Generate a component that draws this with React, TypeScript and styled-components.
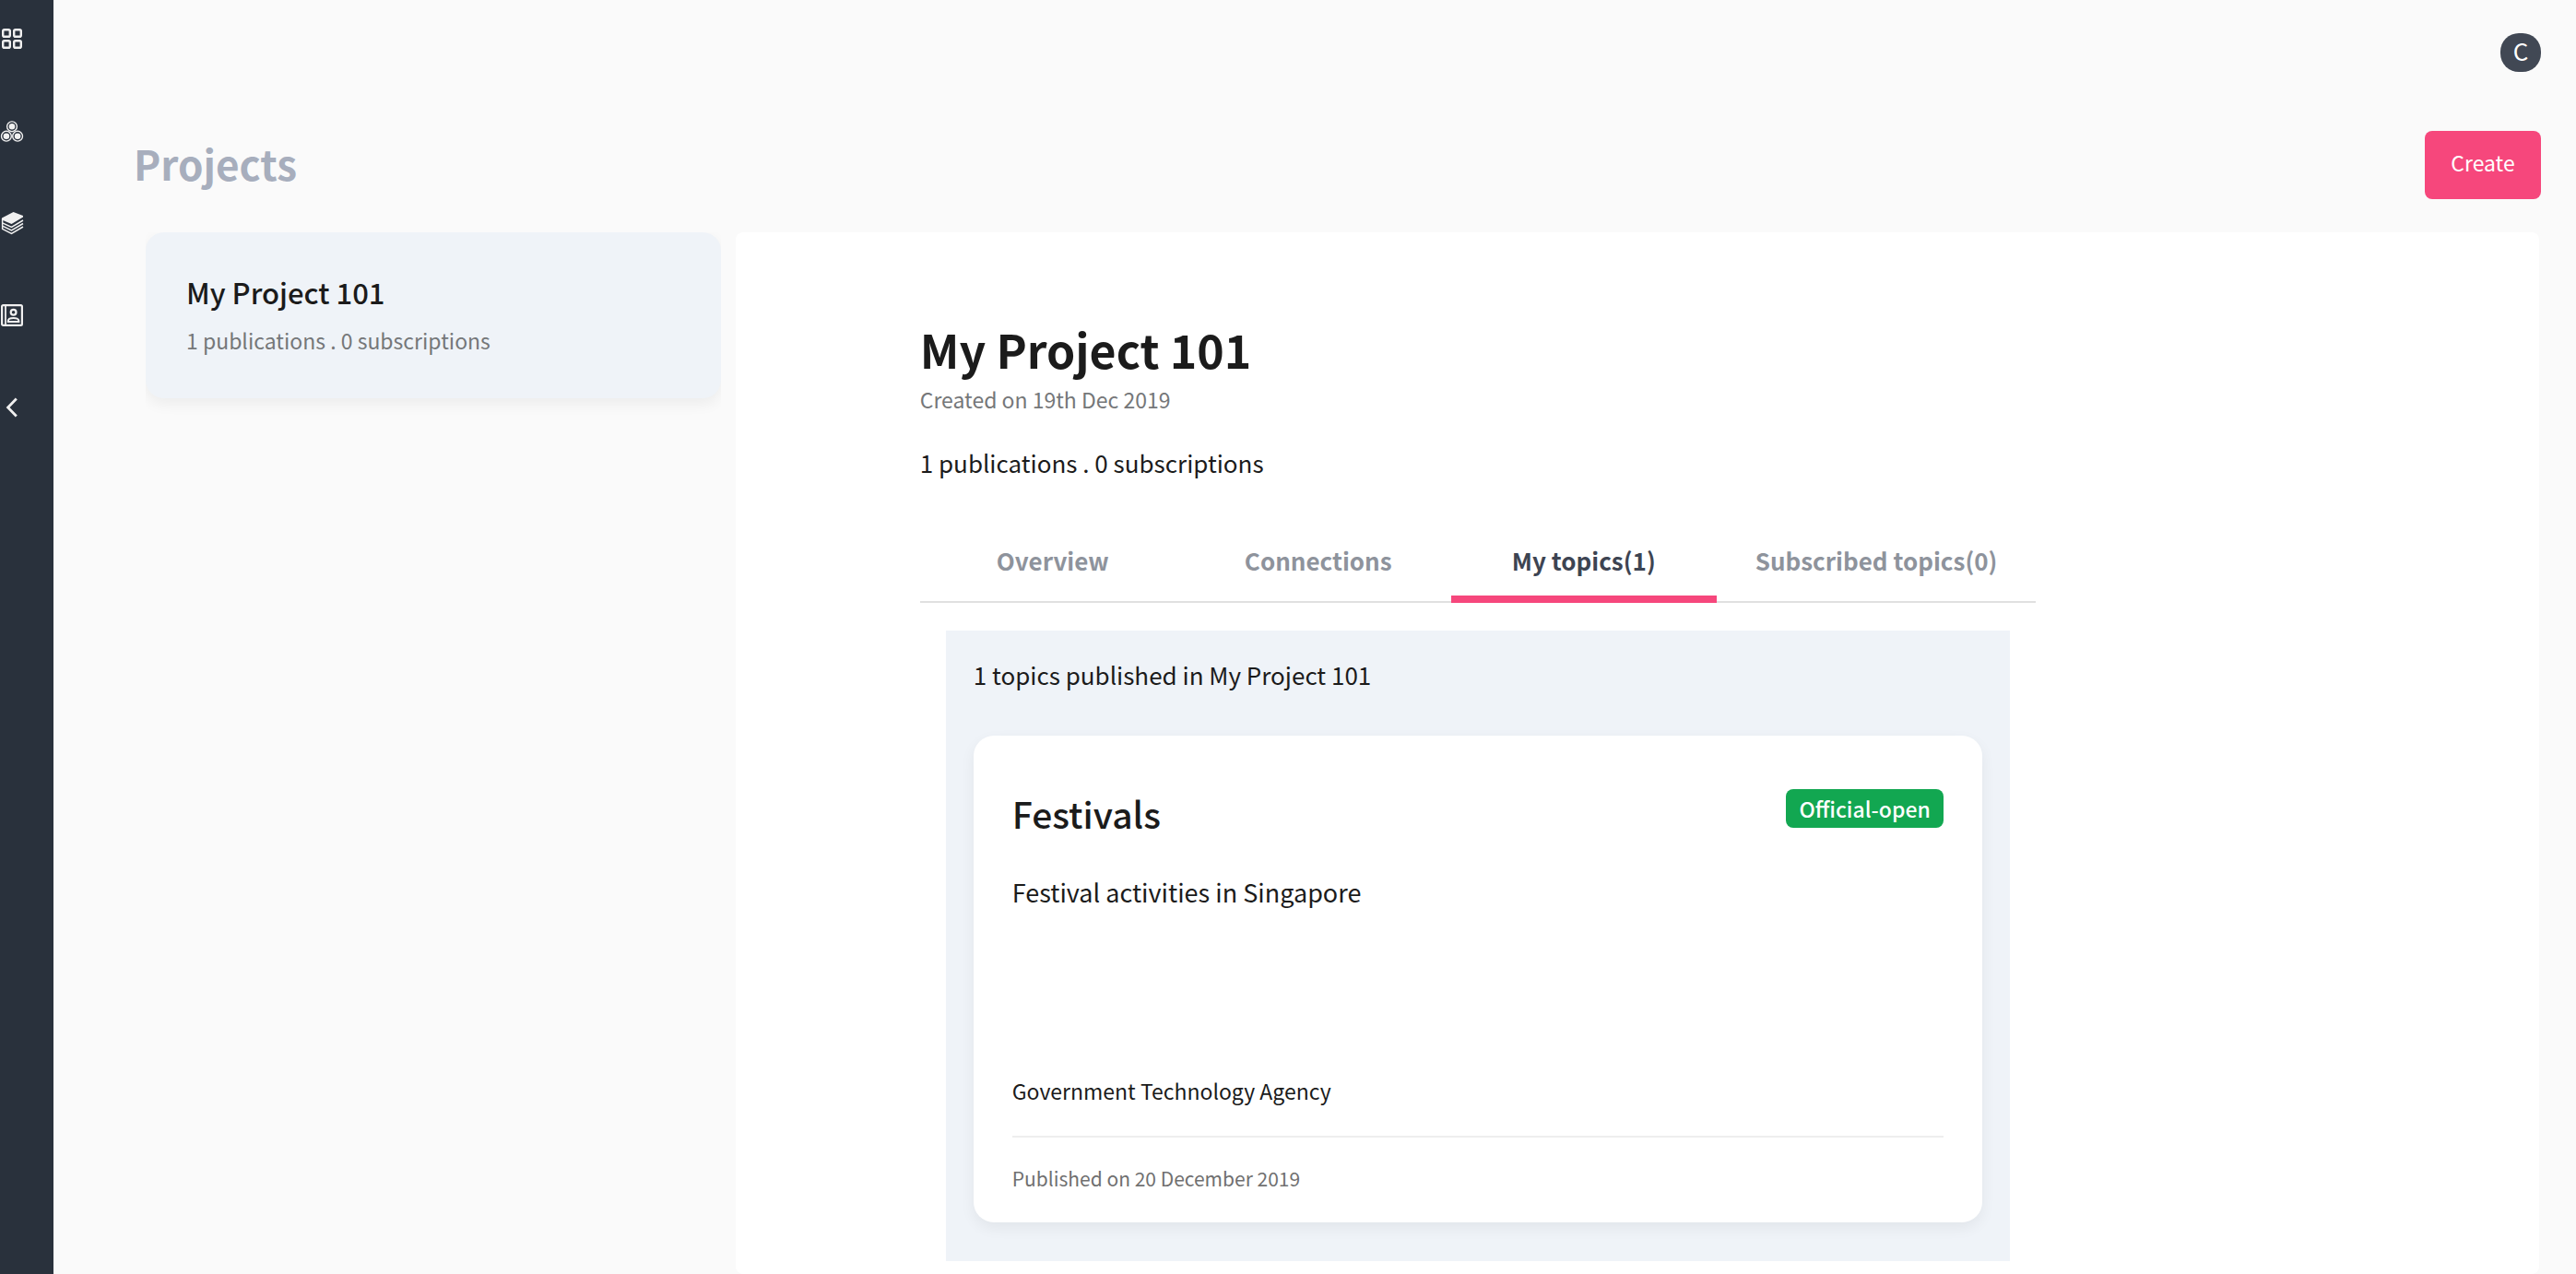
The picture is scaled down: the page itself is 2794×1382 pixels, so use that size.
import React from "react";
import styled, { createGlobalStyle } from "styled-components";

const GlobalStyle = createGlobalStyle`
  *, *::before, *::after { box-sizing: border-box; }
  body {
    margin: 0;
    background: #fafafa;
    color: #1b1b1b;
    font-family: "Noto Sans CJK JP", "Noto Sans", sans-serif;
    font-size: 26px;
    line-height: 40px;
  }
  h1, h2, h3, p, ul { margin: 0; padding: 0; }
  button { font: inherit; border: 0; cursor: pointer; }
`;

const Shell = styled.div`
  display: flex;
  min-height: 100vh;
`;

const Sidebar = styled.nav`
  flex: 0 0 58px;
  display: flex;
  flex-direction: column;
  gap: 74px;
  padding-top: 29px;
  background: #29313c;
`;

const NavButton = styled.button`
  display: block;
  width: 26px;
  height: 26px;
  padding: 0;
  background: none;
  color: #f0f0f0;

  svg { display: block; }
`;

const Page = styled.div`
  flex: 1;
  min-width: 0;
  display: flex;
  flex-direction: column;
  padding: 36px 38px 0 87px;
`;

const TopBar = styled.header`
  display: flex;
  justify-content: flex-end;
  margin-bottom: 64px;
`;

const Avatar = styled.button`
  width: 44px;
  height: 42px;
  padding: 0 0 4px;
  border-radius: 20px;
  background: #414854;
  color: #fff;
  line-height: 38px;
`;

const TitleBar = styled.div`
  display: flex;
  justify-content: space-between;
  align-items: flex-start;
  margin-bottom: 36px;
`;

const PageTitle = styled.h1`
  font-size: 44px;
  font-weight: 700;
  line-height: 70px;
  color: #a7aebd;
`;

const CreateButton = styled.button`
  min-width: 126px;
  padding: 18px 28px 24px;
  border-radius: 8px;
  background: #f6477c;
  color: #fff;
  font-size: 23px;
  line-height: 32px;
`;

const Columns = styled.main`
  flex: 1;
  display: grid;
  grid-template-columns: minmax(0, 1fr) minmax(0, 3fr);
`;

const ProjectList = styled.ul`
  list-style: none;
  margin: 0 16px 0 13px;
  padding-bottom: 24px;
  overflow: hidden;
`;

const ProjectCard = styled.li`
  padding: 43px 44px 47px;
  border-radius: 20px;
  background: #eff3f8;
  box-shadow: 0 6px 16px rgba(0, 0, 0, 0.06);
`;

const ProjectCardTitle = styled.h2`
  margin-bottom: 14px;
  font-size: 31px;
  font-weight: 500;
  line-height: 44px;
`;

const Muted = styled.p`
  font-size: 23px;
  line-height: 32px;
  color: #757779;
`;

const Detail = styled.section`
  margin-right: 2px;
  padding: 93px 200px 14px;
  border-radius: 8px;
  background: #fff;
`;

const DetailBody = styled.div`
  max-width: 1210px;
`;

const DetailTitle = styled.h2`
  margin-bottom: 6px;
  font-size: 50px;
  font-weight: 700;
  line-height: 66px;
`;

const Counts = styled.p`
  margin: 33px 0 38px;
`;

const Tabs = styled.div`
  display: flex;
  box-shadow: inset 0 -2px #e0e0e0;
`;

const Tab = styled.button<{ $active?: boolean }>`
  flex: 1 0 auto;
  min-width: 288px;
  padding: 28px 42px 18px;
  border-bottom: 8px solid ${(p) => (p.$active ? "#f6477c" : "transparent")};
  background: none;
  color: ${(p) => (p.$active ? "#3d4452" : "#8e939c")};
  font-weight: 700;

  &:not(:last-child) { flex: 0 0 288px; }
`;

const TopicPanel = styled.div`
  margin: 30px 28px 0;
  padding: 28px 30px 42px;
  background: #eff3f8;
`;

const TopicCard = styled.article`
  margin-top: 46px;
  padding: 58px 42px 32px;
  border-radius: 22px;
  background: #fff;
  box-shadow: 0 6px 16px rgba(0, 0, 0, 0.06);
`;

const TopicHead = styled.div`
  display: flex;
  justify-content: space-between;
  align-items: flex-start;
  margin-bottom: 40px;
`;

const TopicTitle = styled.h3`
  font-size: 39px;
  font-weight: 500;
  line-height: 52px;
`;

const Badge = styled.span`
  padding: 5px 14px 5px;
  border-radius: 8px;
  background: #12a751;
  color: #fff;
  font-size: 23px;
  font-weight: 500;
  line-height: 32px;
`;

const TopicText = styled.p`
  min-height: 219px;
  font-size: 27px;
`;

const Agency = styled.p`
  padding-bottom: 33px;
  border-bottom: 2px solid #eeeeee;
  font-size: 23px;
  line-height: 32px;
`;

const Published = styled.p`
  margin-top: 28px;
  font-size: 21px;
  line-height: 32px;
  color: #707070;
`;

const Icon = ({ children }: { children: React.ReactNode }) => (
  <svg width="26" height="26" viewBox="0 0 26 26" fill="none" stroke="currentColor" aria-hidden="true">
    {children}
  </svg>
);

const navItems = [
  {
    label: "Dashboard",
    icon: (
      <g strokeWidth="2.4">
        <rect x="3.2" y="3.2" width="7.6" height="7.6" rx="1.6" />
        <rect x="15.2" y="3.2" width="7.6" height="7.6" rx="1.6" />
        <rect x="3.2" y="15.2" width="7.6" height="7.6" rx="1.6" />
        <rect x="15.2" y="15.2" width="7.6" height="7.6" rx="1.6" />
      </g>
    ),
  },
  {
    label: "Groups",
    icon: [
      [13, 8.3],
      [6.9, 18.7],
      [19.1, 18.7],
    ].map(([x, y]) => (
      <g key={x}>
        <circle cx={x} cy={y} r="5.4" strokeWidth="1.4" />
        <circle cx={x} cy={y} r="3.3" fill="currentColor" stroke="none" />
      </g>
    )),
  },
  {
    label: "Topics",
    icon: (
      <>
        <path d="M2 7.6 L14.5 1 L25 5 V6.6 L12.5 14 L2 9.4 Z" fill="currentColor" stroke="none" />
        <path
          d="M2.6 8 V19.4 M2.2 12.6 L12.5 17.4 L25 10 M2.2 15.9 L12.5 20.9 L25 13.5 M2.2 19.2 L12.5 24.4 L25 17"
          strokeWidth="1.5"
        />
      </>
    ),
  },
  {
    label: "Contacts",
    icon: (
      <>
        <rect x="2.1" y="2.1" width="21.8" height="21.8" rx="1.4" strokeWidth="2.2" />
        <path d="M6 2 V24" strokeWidth="1.8" />
        <circle cx="14.6" cy="9.7" r="2.9" strokeWidth="2.2" />
        <path d="M8.8 20 V19.2 C8.8 14.8 20.4 14.8 20.4 19.2 V20 Z" strokeWidth="2" />
      </>
    ),
  },
  { label: "Collapse menu", icon: <path d="M17.8 3.6 L8.6 13 L17.8 22.4" strokeWidth="2.8" /> },
];

const tabs = ["Overview", "Connections", "My topics(1)", "Subscribed topics(0)"];

export default function App() {
  return (
    <>
      <GlobalStyle />
      <Shell>
        <Sidebar aria-label="Main">
          {navItems.map((item) => (
            <NavButton key={item.label} type="button" aria-label={item.label}>
              <Icon>{item.icon}</Icon>
            </NavButton>
          ))}
        </Sidebar>
        <Page>
          <TopBar>
            <Avatar type="button">C</Avatar>
          </TopBar>
          <TitleBar>
            <PageTitle>Projects</PageTitle>
            <CreateButton type="button">Create</CreateButton>
          </TitleBar>
          <Columns>
            <ProjectList>
              <ProjectCard>
                <ProjectCardTitle>My Project 101</ProjectCardTitle>
                <Muted>1 publications . 0 subscriptions</Muted>
              </ProjectCard>
            </ProjectList>
            <Detail>
              <DetailBody>
                <DetailTitle>My Project 101</DetailTitle>
                <Muted>Created on 19th Dec 2019</Muted>
                <Counts>1 publications . 0 subscriptions</Counts>
                <Tabs role="tablist">
                  {tabs.map((tab, i) => (
                    <Tab key={tab} type="button" role="tab" aria-selected={i === 2} $active={i === 2}>
                      {tab}
                    </Tab>
                  ))}
                </Tabs>
                <TopicPanel role="tabpanel">
                  <p>1 topics published in My Project 101</p>
                  <TopicCard>
                    <TopicHead>
                      <TopicTitle>Festivals</TopicTitle>
                      <Badge>Official-open</Badge>
                    </TopicHead>
                    <TopicText>Festival activities in Singapore</TopicText>
                    <Agency>Government Technology Agency</Agency>
                    <Published>Published on 20 December 2019</Published>
                  </TopicCard>
                </TopicPanel>
              </DetailBody>
            </Detail>
          </Columns>
        </Page>
      </Shell>
    </>
  );
}
